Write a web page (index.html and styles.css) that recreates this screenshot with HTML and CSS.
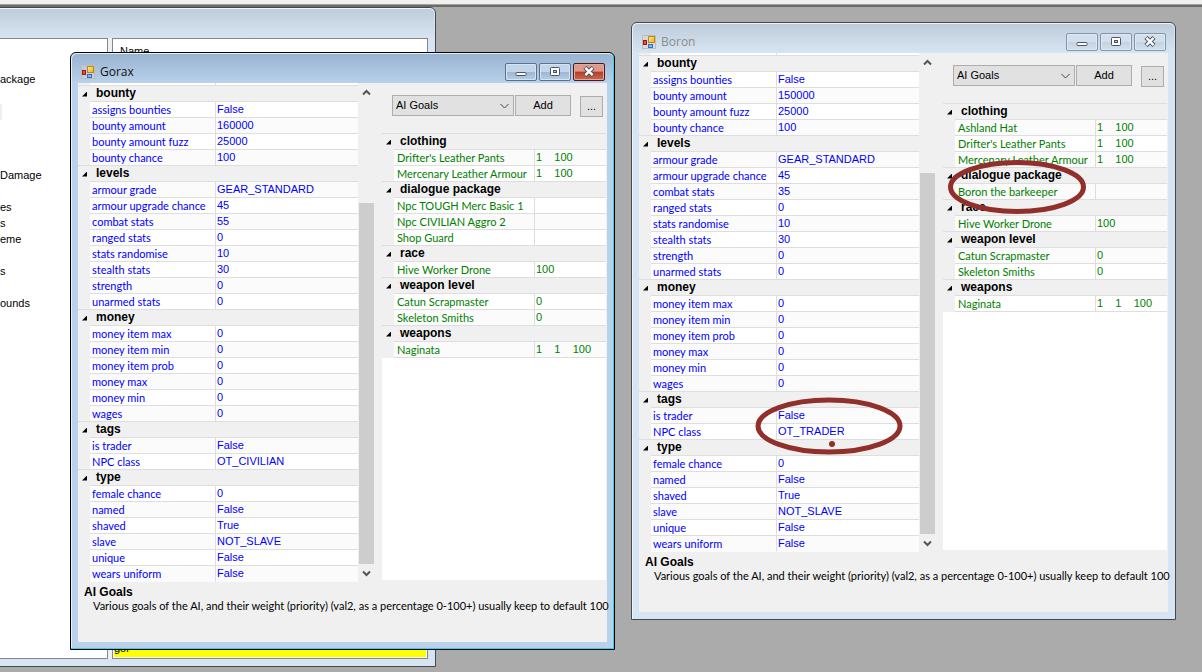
FILE: index.html
```html
<!DOCTYPE html>
<html lang="en">
<head>
<meta charset="utf-8">
<title>Character editor</title>
<link rel="stylesheet" href="styles.css">
</head>
<body>
<svg class="defs" aria-hidden="true">
  <defs>
    <linearGradient id="gold" x1="0" y1="0" x2="1" y2="1"><stop offset="0" stop-color="#fff3a0"/><stop offset="1" stop-color="#f0a800"/></linearGradient>
    <symbol id="form" viewBox="0 0 14 14">
      <rect x="0.5" y="0.5" width="13" height="13" fill="#dcdcdc" fill-opacity=".4" stroke="#bdbdbd"/>
      <rect x="1.500" y="5.500" width="3" height="4" fill="#e0503a" stroke="#9c1a12"/>
      <rect x="6.500" y="1.500" width="6" height="6" fill="url(#gold)" stroke="#b98a14"/>
      <rect x="6.500" y="9.500" width="4" height="3" fill="#88b4f8" stroke="#3d69c4"/>
    </symbol>
    <symbol id="min" viewBox="0 0 12 12"><rect x="1" y="6.500" width="10" height="3" rx=".8" fill="#fff" stroke="#4b5566"/></symbol>
    <symbol id="max" viewBox="0 0 12 12"><rect x="1.500" y="1.500" width="9" height="8" rx=".8" fill="#fff" stroke="#4b5566"/><rect x="4.500" y="4.500" width="3" height="2" fill="#b4c6da" stroke="#4b5566"/></symbol>
    <symbol id="close" viewBox="0 0 12 12"><path d="M2 1.500l8 8M10 1.500l-8 8" stroke="#4b5566" stroke-width="4.400"/><path d="M2.400 1.900l7.200 7.200M9.600 1.900l-7.200 7.200" stroke="#fff" stroke-width="2.400"/></symbol>
    <symbol id="up" viewBox="0 0 9 7"><path d="M1 5.500l3.500-3.500L8 5.500" fill="none" stroke="#555" stroke-width="2"/></symbol>
    <symbol id="down" viewBox="0 0 9 7"><path d="M1 1.500L4.500 5 8 1.500" fill="none" stroke="#555" stroke-width="2"/></symbol>
  </defs>
</svg>
<div class="toolbar-edge"></div>
<main class="desktop">

<section class="window back" aria-label="Item list">
  <div class="titlebar"></div>
  <div class="back-body">
    <ul class="tree">
      <li></li><li></li><li>ackage</li><li></li><li class="mark"></li><li></li><li></li><li></li><li>Damage</li><li></li><li>es</li><li>s</li><li>eme</li><li></li><li>s</li><li></li><li>ounds</li>
    </ul>
    <div class="list">
      <div class="list-head">Name</div>
      <div class="selected">gor</div>
    </div>
  </div>
</section>

<section class="window boron" aria-label="Boron">
  <header class="titlebar">
    <svg class="form-icon"><use href="#form"/></svg><h2>Boron</h2>
    <button class="wbtn" aria-label="Minimize"><svg><use href="#min"/></svg></button>
    <button class="wbtn" aria-label="Maximize"><svg><use href="#max"/></svg></button>
    <button class="wbtn close" aria-label="Close"><svg><use href="#close"/></svg></button>
  </header>
  <div class="client">
    <div class="panes">
      <div class="left">
        <table class="grid props">
          <colgroup><col class="gutter"><col class="name"><col></colgroup>
          <tbody>
          <tr class="stub"><td></td><td></td><td></td></tr>
          <tr class="cat"><td></td><th colspan="2">bounty</th></tr>
          <tr><td></td><td>assigns bounties</td><td>False</td></tr>
          <tr><td></td><td>bounty amount</td><td>150000</td></tr>
          <tr><td></td><td>bounty amount fuzz</td><td>25000</td></tr>
          <tr><td></td><td>bounty chance</td><td>100</td></tr>
          <tr class="cat"><td></td><th colspan="2">levels</th></tr>
          <tr><td></td><td>armour grade</td><td>GEAR_STANDARD</td></tr>
          <tr><td></td><td>armour upgrade chance</td><td>45</td></tr>
          <tr><td></td><td>combat stats</td><td>35</td></tr>
          <tr><td></td><td>ranged stats</td><td>0</td></tr>
          <tr><td></td><td>stats randomise</td><td>10</td></tr>
          <tr><td></td><td>stealth stats</td><td>30</td></tr>
          <tr><td></td><td>strength</td><td>0</td></tr>
          <tr><td></td><td>unarmed stats</td><td>0</td></tr>
          <tr class="cat"><td></td><th colspan="2">money</th></tr>
          <tr><td></td><td>money item max</td><td>0</td></tr>
          <tr><td></td><td>money item min</td><td>0</td></tr>
          <tr><td></td><td>money item prob</td><td>0</td></tr>
          <tr><td></td><td>money max</td><td>0</td></tr>
          <tr><td></td><td>money min</td><td>0</td></tr>
          <tr><td></td><td>wages</td><td>0</td></tr>
          <tr class="cat"><td></td><th colspan="2">tags</th></tr>
          <tr><td></td><td>is trader</td><td>False</td></tr>
          <tr><td></td><td>NPC class</td><td>OT_TRADER</td></tr>
          <tr class="cat"><td></td><th colspan="2">type</th></tr>
          <tr><td></td><td>female chance</td><td>0</td></tr>
          <tr><td></td><td>named</td><td>False</td></tr>
          <tr><td></td><td>shaved</td><td>True</td></tr>
          <tr><td></td><td>slave</td><td>NOT_SLAVE</td></tr>
          <tr><td></td><td>unique</td><td>False</td></tr>
          <tr><td></td><td>wears uniform</td><td>False</td></tr>
          </tbody>
        </table>
        <div class="scroll"><svg><use href="#up"/></svg><div class="thumb"></div><svg><use href="#down"/></svg></div>
      </div>
      <div class="right">
        <div class="tools">
          <select aria-label="Category"><option>AI Goals</option></select>
          <button class="add">Add</button>
          <button class="more">...</button>
        </div>
        <div class="refs">
        <table class="grid">
          <colgroup><col class="gutter"><col class="refname"><col></colgroup>
          <tbody>
          <tr class="cat"><td></td><th colspan="2">clothing</th></tr>
          <tr><td></td><td>Ashland Hat</td><td>1    100</td></tr>
          <tr><td></td><td>Drifter's Leather Pants</td><td>1    100</td></tr>
          <tr><td></td><td>Mercenary Leather Armour</td><td>1    100</td></tr>
          <tr class="cat"><td></td><th colspan="2">dialogue package</th></tr>
          <tr><td></td><td>Boron the barkeeper</td><td></td></tr>
          <tr class="cat"><td></td><th colspan="2">race</th></tr>
          <tr><td></td><td>Hive Worker Drone</td><td>100</td></tr>
          <tr class="cat"><td></td><th colspan="2">weapon level</th></tr>
          <tr><td></td><td>Catun Scrapmaster</td><td>0</td></tr>
          <tr><td></td><td>Skeleton Smiths</td><td>0</td></tr>
          <tr class="cat"><td></td><th colspan="2">weapons</th></tr>
          <tr><td></td><td>Naginata</td><td>1    1    100</td></tr>
          </tbody>
        </table>
        </div>
      </div>
    </div>
    <div class="help"><h3>AI Goals</h3><p>Various goals of the AI, and their weight (priority) (val2, as a percentage 0-100+) usually keep to default 100</p></div>
  </div>
</section>

<section class="window active gorax" aria-label="Gorax">
  <header class="titlebar">
    <svg class="form-icon"><use href="#form"/></svg><h2>Gorax</h2>
    <button class="wbtn" aria-label="Minimize"><svg><use href="#min"/></svg></button>
    <button class="wbtn" aria-label="Maximize"><svg><use href="#max"/></svg></button>
    <button class="wbtn close" aria-label="Close"><svg><use href="#close"/></svg></button>
  </header>
  <div class="client">
    <div class="panes">
      <div class="left">
        <table class="grid props">
          <colgroup><col class="gutter"><col class="name"><col></colgroup>
          <tbody>
          <tr class="stub"><td></td><td></td><td></td></tr>
          <tr class="cat"><td></td><th colspan="2">bounty</th></tr>
          <tr><td></td><td>assigns bounties</td><td>False</td></tr>
          <tr><td></td><td>bounty amount</td><td>160000</td></tr>
          <tr><td></td><td>bounty amount fuzz</td><td>25000</td></tr>
          <tr><td></td><td>bounty chance</td><td>100</td></tr>
          <tr class="cat"><td></td><th colspan="2">levels</th></tr>
          <tr><td></td><td>armour grade</td><td>GEAR_STANDARD</td></tr>
          <tr><td></td><td>armour upgrade chance</td><td>45</td></tr>
          <tr><td></td><td>combat stats</td><td>55</td></tr>
          <tr><td></td><td>ranged stats</td><td>0</td></tr>
          <tr><td></td><td>stats randomise</td><td>10</td></tr>
          <tr><td></td><td>stealth stats</td><td>30</td></tr>
          <tr><td></td><td>strength</td><td>0</td></tr>
          <tr><td></td><td>unarmed stats</td><td>0</td></tr>
          <tr class="cat"><td></td><th colspan="2">money</th></tr>
          <tr><td></td><td>money item max</td><td>0</td></tr>
          <tr><td></td><td>money item min</td><td>0</td></tr>
          <tr><td></td><td>money item prob</td><td>0</td></tr>
          <tr><td></td><td>money max</td><td>0</td></tr>
          <tr><td></td><td>money min</td><td>0</td></tr>
          <tr><td></td><td>wages</td><td>0</td></tr>
          <tr class="cat"><td></td><th colspan="2">tags</th></tr>
          <tr><td></td><td>is trader</td><td>False</td></tr>
          <tr><td></td><td>NPC class</td><td>OT_CIVILIAN</td></tr>
          <tr class="cat"><td></td><th colspan="2">type</th></tr>
          <tr><td></td><td>female chance</td><td>0</td></tr>
          <tr><td></td><td>named</td><td>False</td></tr>
          <tr><td></td><td>shaved</td><td>True</td></tr>
          <tr><td></td><td>slave</td><td>NOT_SLAVE</td></tr>
          <tr><td></td><td>unique</td><td>False</td></tr>
          <tr><td></td><td>wears uniform</td><td>False</td></tr>
          </tbody>
        </table>
        <div class="scroll"><svg><use href="#up"/></svg><div class="thumb"></div><svg><use href="#down"/></svg></div>
      </div>
      <div class="right">
        <div class="tools">
          <select aria-label="Category"><option>AI Goals</option></select>
          <button class="add">Add</button>
          <button class="more">...</button>
        </div>
        <div class="refs">
        <table class="grid">
          <colgroup><col class="gutter"><col class="refname"><col></colgroup>
          <tbody>
          <tr class="cat"><td></td><th colspan="2">clothing</th></tr>
          <tr><td></td><td>Drifter's Leather Pants</td><td>1    100</td></tr>
          <tr><td></td><td>Mercenary Leather Armour</td><td>1    100</td></tr>
          <tr class="cat"><td></td><th colspan="2">dialogue package</th></tr>
          <tr><td></td><td>Npc TOUGH Merc Basic 1</td><td></td></tr>
          <tr><td></td><td>Npc CIVILIAN Aggro 2</td><td></td></tr>
          <tr><td></td><td>Shop Guard</td><td></td></tr>
          <tr class="cat"><td></td><th colspan="2">race</th></tr>
          <tr><td></td><td>Hive Worker Drone</td><td>100</td></tr>
          <tr class="cat"><td></td><th colspan="2">weapon level</th></tr>
          <tr><td></td><td>Catun Scrapmaster</td><td>0</td></tr>
          <tr><td></td><td>Skeleton Smiths</td><td>0</td></tr>
          <tr class="cat"><td></td><th colspan="2">weapons</th></tr>
          <tr><td></td><td>Naginata</td><td>1    1    100</td></tr>
          </tbody>
        </table>
        </div>
      </div>
    </div>
    <div class="help"><h3>AI Goals</h3><p>Various goals of the AI, and their weight (priority) (val2, as a percentage 0-100+) usually keep to default 100</p></div>
  </div>
</section>

<svg class="ring ring-package" viewBox="0 0 140 56" aria-hidden="true"><ellipse cx="70" cy="28" rx="66.500" ry="24.500"/></svg>
<svg class="ring ring-class" viewBox="0 0 150 58" aria-hidden="true"><ellipse cx="75" cy="29" rx="71" ry="26"/><circle cx="78" cy="47" r="3"/></svg>
</main>
</body>
</html>
```
FILE: styles.css
```css
* { box-sizing: border-box; }
body {
  margin: 0;
  min-height: 100vh;
  display: flex;
  flex-direction: column;
  background: #ababab;
  font: 11px/15px "Liberation Sans", Arial, sans-serif;
  color: #000;
  overflow: hidden;
}
.defs { position: absolute; width: 0; height: 0; }
h2, h3, p, ul { margin: 0; padding: 0; font-weight: normal; list-style: none; }
button, select { font: inherit; color: inherit; margin: 0; }

.toolbar-edge {
  height: 7px;
  background: #f0f0f0;
  border-bottom: 2px solid #6c6c66;
  box-shadow: inset 0 -1px 0 #a0a0a0;
}
.desktop { flex: 1; position: relative; }

/* Windows */
.window {
  position: absolute;
  display: flex;
  flex-direction: column;
  width: 545px;
  padding: 0 7px 7px;
  background: #d7e4f2;
  border: 1px solid #45484d;
  border-radius: 6px 6px 0 0;
  box-shadow: inset 1px 1px 0 #edf3fa;
}
.window.active {
  background: #b9d1ea;
  border-color: #000;
  box-shadow: inset -1px -1px 0 #2fd3ee, inset 1px 1px 0 #e6f0fa;
}
.boron { left: 631px; top: 15px; }
.gorax { left: 70px; top: 45px; }
.back { left: -40px; top: 0; bottom: 5px; width: 476px; }

.titlebar {
  display: flex;
  align-items: center;
  gap: 2px;
  height: 29px;
  margin: 1px -6px 0;
  padding: 6px 8px 0 9px;
  border-radius: 5px 5px 0 0;
  background: linear-gradient(#bfcddb, #d7e4f2);
}
.active .titlebar { background: linear-gradient(#99b4d1, #b9d1ea); }
.titlebar h2 {
  flex: 1;
  padding-left: 3px;
  font: 12px/16px "Open Sans", sans-serif;
  color: #8c8c8c;
}
.active h2 { color: #111; }
.form-icon { width: 14px; height: 14px; }
.wbtn {
  display: grid;
  place-items: center;
  width: 32px;
  height: 18px;
  padding: 0;
  border: 1px solid #8394ae;
  border-radius: 2px;
  background: linear-gradient(#d3dfec 50%, #c3d2e2 50%, #d2e0ee);
  box-shadow: inset 0 0 0 1px #dfe9f4;
}
.wbtn svg { width: 12px; height: 12px; }
.active .wbtn {
  border-color: #5b708e;
  background: linear-gradient(#c3d5ea 50%, #9cb6d3 50%, #b6cfe8);
  box-shadow: inset 0 0 0 1px #d5e4f3;
}
.active .wbtn.close {
  border-color: #52191a;
  background: linear-gradient(#dc9a8b 45%, #b83c25 50%, #ca6a50);
  box-shadow: inset 0 0 0 1px #e5a99b;
}
.client { background: #f0f0f0; }
.panes { display: flex; }

/* Grids */
.left { display: flex; width: 297px; }
.props { flex: 1; }
.grid {
  width: 100%;
  table-layout: fixed;
  border-spacing: 0;
  white-space: pre;
}
.gutter { width: 12px; }
.name { width: 126px; }
.refname { width: 141px; }
.grid td, .grid th {
  height: 16px;
  padding: 0 0 0 2px;
  border-bottom: 1px solid #dedede;
  text-align: left;
  overflow: visible;
}
.grid td { color: #008000; background: #fff; }
.grid tr:nth-child(even) td { background: #fbfbfb; }
.grid td + td:not(:last-child) {
  padding-left: 3px;
  border-right: 1px solid #dedede;
  font-family: Lato, "Liberation Sans", sans-serif;
}
.grid.props td + td:not(:last-child) { padding-left: 2px; }
.props td { color: #0000ff; }
.grid td:last-child { padding-left: 1px; }
.grid tr td:first-child { padding: 0; background: #f0f0f0; border-bottom-color: #f0f0f0; }
.grid tr:has(+ .cat) td:first-child { border-bottom-color: #dedede; }
.grid .cat th {
  padding-left: 6px;
  background: #f0f0f0;
  font-size: 12px;
  font-weight: bold;
}
.cat td::after {
  content: "";
  display: block;
  width: 5px;
  height: 5px;
  margin: 1px 0 0 4px;
  background: #000;
  clip-path: polygon(100% 0, 100% 100%, 0 100%);
}
.grid .stub td { height: 3px; line-height: 0; }
.props tr:last-child td { border-bottom-color: #fbfbfb; }
.props tr:last-child td:first-child { border-bottom-color: #f0f0f0; }

.scroll {
  display: flex;
  flex-direction: column;
  align-items: center;
  width: 17px;
  padding: 6px 0 5px;
}
.scroll svg { width: 9px; height: 7px; }
.thumb { width: 15px; flex: 1; margin: 107px 0 6px; background: #cdcdcd; }

.right { flex: 1; display: flex; flex-direction: column; padding: 12px 1px 2px 7px; }
.tools {
  display: flex;
  align-items: flex-start;
  padding: 0 3px 16px 10px;
  gap: 1px;
}
.tools select {
  appearance: none;
  width: 122px;
  height: 21px;
  padding: 0 3px;
  border: 1px solid #adadad;
  border-radius: 0;
  background: #e1e1e1 url("data:image/svg+xml,%3Csvg xmlns='http://www.w3.org/2000/svg' width='9' height='6'%3E%3Cpath d='M.5 1l4 4 4-4' fill='none' stroke='%23444'/%3E%3C/svg%3E") no-repeat right 4px center;
}
.tools button { height: 21px; padding: 0; border: 1px solid #adadad; background: #e1e1e1; }
.tools .add { width: 56px; }
.tools .more { width: 23px; margin: 1px 0 0 auto; }
.refs { flex: 1; background: #fff; border-top: 1px solid #dedede; }

.help { padding: 2px 6px 30px; min-height: 60px; }
.help h3 { font-size: 12px; line-height: 16px; font-weight: bold; }
.help p {
  padding-left: 9px;
  font-family: Lato, "Liberation Sans", sans-serif;
  line-height: 11px;
  white-space: nowrap;
}

/* Window behind */
.back-body { flex: 1; display: flex; gap: 4px; background: #f0f0f0; }
.tree { width: 140px; padding: 1px 0 0 31px; background: #fff; border: 1px solid #828790; }
.tree li { height: 16px; }
.tree .mark { width: 2px; background: #f0f0f0; }
.list {
  flex: 1;
  display: flex;
  flex-direction: column;
  justify-content: space-between;
  background: #fff;
  border: 1px solid #828790;
  padding: 1px;
}
.list-head { padding: 4px 6px; }
.selected { height: 16px; background: #ffff00; line-height: 15px; }

/* Hand-drawn marks */
.ring { position: absolute; fill: none; stroke: #912f2a; stroke-width: 5; }
.ring circle { fill: #912f2a; stroke: none; }
.ring-package { left: 947px; top: 152px; width: 140px; height: 56px; }
.ring-class { left: 754px; top: 390px; width: 150px; height: 58px; }
```
